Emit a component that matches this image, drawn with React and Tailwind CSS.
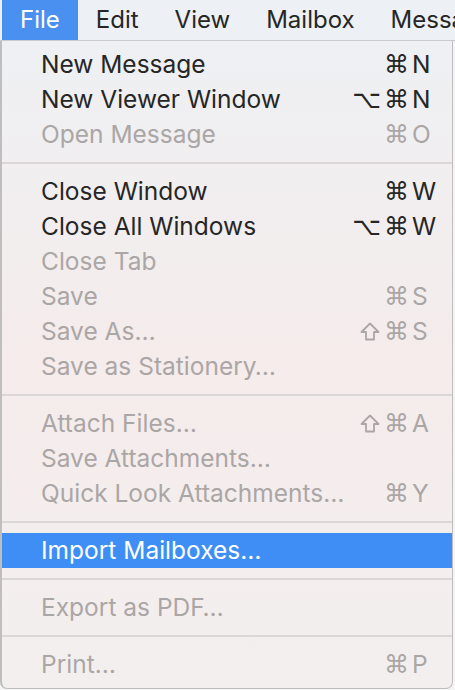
import React from 'react';

const menuBar = ['File', 'Edit', 'View', 'Mailbox', 'Message'];

// groups of menu items, separators drawn between groups
const groups = [
  [
    { label: 'New Message', mods: ['cmd'], key: 'N' },
    { label: 'New Viewer Window', mods: ['opt', 'cmd'], key: 'N' },
    { label: 'Open Message', mods: ['cmd'], key: 'O', disabled: true },
  ],
  [
    { label: 'Close Window', mods: ['cmd'], key: 'W' },
    { label: 'Close All Windows', mods: ['opt', 'cmd'], key: 'W' },
    { label: 'Close Tab', disabled: true },
    { label: 'Save', mods: ['cmd'], key: 'S', disabled: true },
    { label: 'Save As…', mods: ['shift', 'cmd'], key: 'S', disabled: true },
    { label: 'Save as Stationery…', disabled: true },
  ],
  [
    { label: 'Attach Files…', mods: ['shift', 'cmd'], key: 'A', disabled: true },
    { label: 'Save Attachments…', disabled: true },
    { label: 'Quick Look Attachments…', mods: ['cmd'], key: 'Y', disabled: true },
  ],
  [{ label: 'Import Mailboxes…', active: true }],
  [{ label: 'Export as PDF…', disabled: true }],
  [{ label: 'Print…', mods: ['cmd'], key: 'P', disabled: true }],
];

// outlined shift arrow, the DejaVu one is too small
const ShiftIcon = () => (
  <svg width="20" height="19" viewBox="0 0 20 19" className="mr-[4px]">
    <path
      d="M10 1.5 L18.5 10 H14 V17.5 H6 V10 H1.5 Z"
      fill="none"
      stroke="currentColor"
      strokeWidth="1.8"
      strokeLinejoin="round"
    />
  </svg>
);

const Modifier = ({ name }) => {
  if (name === 'shift') return <ShiftIcon />;
  return (
    <span className="font-['DejaVu_Sans',sans-serif] text-[25px] mr-[3px]">
      {name === 'cmd' ? '⌘' : '⌥'}
    </span>
  );
};

const MenuItem = ({ item }) => {
  const color = item.active
    ? 'bg-[#3e8ef6] text-white'
    : item.disabled
    ? 'text-[#aba6a6]'
    : 'text-[#262626]';

  return (
    <div className={`flex items-center h-[35px] pl-[39px] pr-[17px] ${color}`}>
      <span className="flex-1 whitespace-nowrap">{item.label}</span>
      {item.key && (
        <div className="flex items-center">
          {item.mods.map((m) => (
            <Modifier key={m} name={m} />
          ))}
          <span className="w-[23px]">{item.key}</span>
        </div>
      )}
    </div>
  );
};

const Separator = () => (
  <div className="h-[22px] flex items-center">
    <div className="w-full h-[2px] bg-[#dbd7d7]" />
  </div>
);

export default function App() {
  return (
    <div className="w-[455px] h-[690px] overflow-hidden bg-[#f4f4f4] font-['Inter','DejaVu_Sans',sans-serif] text-[24.5px] leading-none">
      {/* Menu bar */}
      <div className="flex h-[41px] bg-[#edf0f4] border-b border-[#c9cacd] pl-[2px] whitespace-nowrap text-[24px]">
        {menuBar.map((name, i) => (
          <div
            key={name}
            className={`flex items-center px-[18px] ${
              i === 0 ? 'bg-[#4a90f1] text-white' : 'text-[#262626]'
            }`}
          >
            {name}
          </div>
        ))}
      </div>

      {/* Dropdown */}
      <div className="w-[453px] h-[648px] pt-[6px] border-l-2 border-r border-b border-[#bfbdbd] rounded-b-[7px] bg-gradient-to-b from-[#eef0f3] via-[#f5eceb] to-[#f3efef]">
        {groups.map((group, gi) => (
          <div key={gi}>
            {gi > 0 && <Separator />}
            {group.map((item) => (
              <MenuItem key={item.label} item={item} />
            ))}
          </div>
        ))}
      </div>
    </div>
  );
}
